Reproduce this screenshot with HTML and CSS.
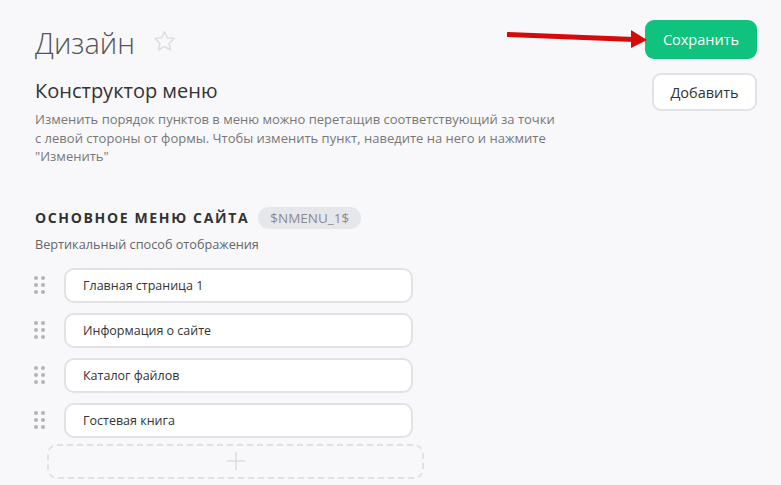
FILE: index.html
```html
<!DOCTYPE html>
<html lang="ru">
<head>
  <meta charset="UTF-8">
  <title>Дизайн</title>
  <link rel="stylesheet" href="styles.css">
</head>
<body>
  <div class="page">
    <div class="main">
      <h1 class="title">Дизайн <span class="star">
        <svg width="23" height="22" viewBox="0 0 24 23"><path d="M12 1.8l3 6.4 7 .8-5.2 4.8 1.4 6.9L12 17.2l-6.2 3.5 1.4-6.9L2 9l7-.8z" fill="none" stroke="#dcdde2" stroke-width="1.6" stroke-linejoin="round"/></svg>
      </span></h1>
      <h2 class="subtitle">Конструктор меню</h2>
      <p class="hint">Изменить порядок пунктов в меню можно перетащив соответствующий за точки с левой стороны от формы. Чтобы изменить пункт, наведите на него и нажмите "Изменить"</p>

      <div class="menu-head">
        <span class="menu-name">Основное меню сайта</span>
        <span class="badge">$NMENU_1$</span>
      </div>
      <div class="menu-type">Вертикальный способ отображения</div>

      <ul class="items">
        <li class="item"><span class="handle"><i></i><i></i><i></i><i></i><i></i><i></i></span><div class="field">Главная страница 1</div></li>
        <li class="item"><span class="handle"><i></i><i></i><i></i><i></i><i></i><i></i></span><div class="field">Информация о сайте</div></li>
        <li class="item"><span class="handle"><i></i><i></i><i></i><i></i><i></i><i></i></span><div class="field">Каталог файлов</div></li>
        <li class="item"><span class="handle"><i></i><i></i><i></i><i></i><i></i><i></i></span><div class="field">Гостевая книга</div></li>
      </ul>
      <div class="add-item">
        <svg width="18" height="18" viewBox="0 0 18 18"><path d="M9 0v18M0 9h18" stroke="#dcdde2" stroke-width="1.6"/></svg>
      </div>
    </div>

    <div class="actions">
      <button class="btn btn-save">Сохранить</button>
      <button class="btn btn-add">Добавить</button>
    </div>
  </div>

  <!-- annotation arrow -->
  <svg class="arrow" width="150" height="24" viewBox="0 0 150 24">
    <path d="M0 4.5L127 9.5" stroke="#d60a0a" stroke-width="5"/>
    <path d="M124 0L140 10L124 18z" fill="#d60a0a"/>
  </svg>
</body>
</html>
```

FILE: styles.css
```css
body {
  margin: 0;
  background: #f8f8fb;
  font-family: "Open Sans", "Noto Sans", sans-serif;
  color: #333;
}

.page {
  display: flex;
  justify-content: space-between;
  padding: 20px 24px 0 35px;
}

.main {
  width: 520px;
}

.title {
  margin: 3px 0 0;
  font-size: 29px;
  font-weight: 300;
  line-height: 40px;
  color: #555;
  display: flex;
  align-items: center;
  gap: 18px;
}

.star {
  display: flex;
  margin-top: -4px;
}

.subtitle {
  margin: 13px 0 0;
  font-size: 20px;
  font-weight: 400;
  line-height: 30px;
  color: #333;
}

.hint {
  margin: 4px 0 0;
  font-size: 13px;
  line-height: 18.5px;
  color: #777;
}

.menu-head {
  display: flex;
  align-items: center;
  gap: 9px;
  margin-top: 41px;
}

.menu-name {
  font-size: 14px;
  font-weight: 700;
  letter-spacing: 1.65px;
  text-transform: uppercase;
  color: #333;
}

.badge {
  background: #e6e7eb;
  color: #8a8a8e;
  font-size: 13.5px;
  border-radius: 11px;
  padding: 0 12px;
  line-height: 22px;
}

.menu-type {
  margin-top: 6px;
  font-size: 12.7px;
  color: #666;
  line-height: 18px;
}

.items {
  list-style: none;
  margin: 15px 0 0;
  padding: 0;
}

.item {
  display: flex;
  align-items: center;
  gap: 19px;
  margin-bottom: 10px;
}

.handle {
  display: grid;
  grid-template-columns: 4px 4px;
  gap: 3px;
  margin-left: -1px;
}

.handle i {
  width: 4px;
  height: 4px;
  border-radius: 50%;
  background: #b4b4b8;
}

.field {
  box-sizing: border-box;
  width: 349px;
  height: 35px;
  line-height: 31px;
  padding: 0 17px;
  background: #fff;
  border: 2px solid #e2e2e6;
  border-radius: 10px;
  font-size: 12.5px;
  color: #333;
}

.add-item {
  box-sizing: border-box;
  width: 377px;
  height: 35px;
  margin: -4px 0 0 12px;
  border: 2px dashed #e0e1e5;
  border-radius: 10px;
  display: flex;
  align-items: center;
  justify-content: center;
}

.actions {
  display: flex;
  flex-direction: column;
  align-items: flex-end;
  gap: 14px;
}

.btn {
  font-family: inherit;
  border-radius: 9px;
  font-size: 14.5px;
  cursor: pointer;
}

.btn-save {
  width: 112px;
  height: 39px;
  background: #0fc27e;
  color: #fff;
  border: none;
}

.btn-add {
  width: 105px;
  height: 38px;
  background: #fff;
  color: #333;
  border: 2px solid #e2e2e6;
}

.arrow {
  position: absolute;
  left: 507px;
  top: 30px;
}
```
